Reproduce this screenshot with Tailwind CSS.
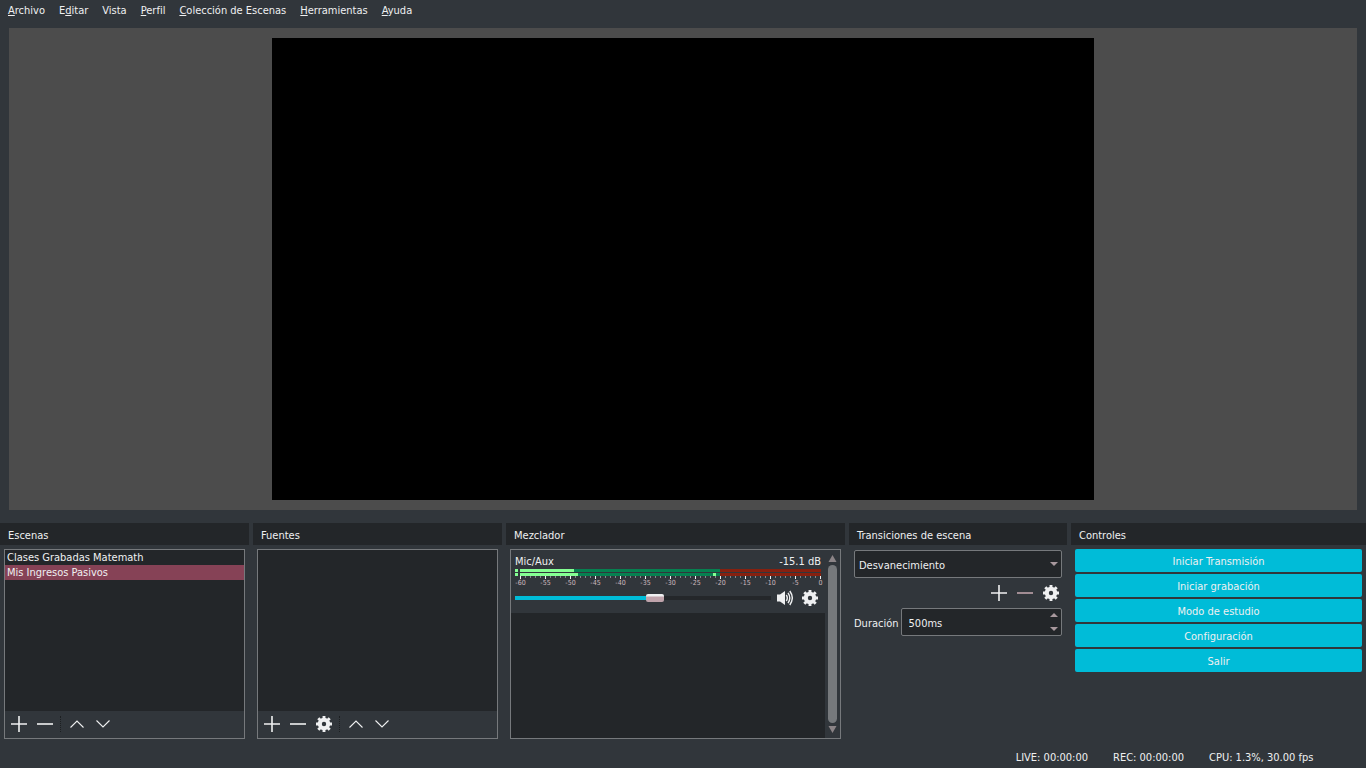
<!DOCTYPE html>
<html lang="es">
<head>
  <meta charset="UTF-8" />
  <meta name="viewport" content="width=device-width, initial-scale=1.0"/>
  <title>OBS</title>
  <script src="https://cdn.jsdelivr.net/npm/@tailwindcss/browser@4"></script>
  <style>
    body {
      font-family: Tahoma, 'DejaVu Sans Condensed', 'Open Sans', sans-serif;
    }
    #volume {
      appearance: none;
      background: linear-gradient(to right, #00bcd8 55%, #24272a 55%) center / 100% 4px no-repeat;
    }
    #volume::-webkit-slider-thumb {
      appearance: none;
      width: 18px;
      height: 8px;
      border-radius: 2px;
      background: linear-gradient(#eff0f1 2px, #bfa3ab 3px);
    }
  </style>
</head>
<body class="h-screen flex flex-col overflow-hidden bg-[#31363b] text-[#eff0f1] text-[11px] leading-[15px]">

  <!-- Shared icons -->
  <svg class="hidden">
    <symbol id="plus" viewBox="0 0 16 16"><path d="M0 8h16M8 0v16" stroke="currentColor" stroke-width="1.600"/></symbol>
    <symbol id="minus" viewBox="0 0 16 16"><path d="M0 8h16" stroke="currentColor" stroke-width="1.600"/></symbol>
    <symbol id="up" viewBox="0 0 16 16"><path d="M1.500 11.500L8 5l6.500 6.500" fill="none" stroke="currentColor" stroke-width="1.100"/></symbol>
    <symbol id="down" viewBox="0 0 16 16"><path d="M1.500 4.500L8 11l6.500-6.500" fill="none" stroke="currentColor" stroke-width="1.100"/></symbol>
    <symbol id="gear" viewBox="0 0 16 16">
      <circle cx="8" cy="8" r="4.200" fill="none" stroke="currentColor" stroke-width="4"/>
      <path d="M8 0v3M8 13v3M0 8h3M13 8h3M2.300 2.300l2 2M11.700 11.700l2 2M2.300 13.700l2-2M11.700 4.300l2-2" stroke="currentColor" stroke-width="2.900"/>
    </symbol>
    <symbol id="speaker" viewBox="0 0 16 16">
      <path d="M0 4.500h3L8 1v14l-5-3.500H0z" fill="currentColor"/>
      <path d="M9.300 5q2 3 0 6M11 2.800q3.600 5.200 0 10.400M12.800 1q5 7 0 14" fill="none" stroke="currentColor" stroke-width="1.400"/>
    </symbol>
  </svg>

  <nav class="flex h-5 shrink-0 items-center gap-[14px] px-2">
    <a href="#"><u>A</u>rchivo</a>
    <a href="#">E<u>d</u>itar</a>
    <a href="#">Vista</a>
    <a href="#"><u>P</u>erfil</a>
    <a href="#"><u>C</u>olección de Escenas</a>
    <a href="#"><u>H</u>erramientas</a>
    <a href="#"><u>A</u>yuda</a>
  </nav>

  <!-- Preview -->
  <main class="mx-[9px] mt-2 flex min-h-0 flex-1 justify-center bg-[#4c4c4c] py-[10px]">
    <div class="aspect-video h-full bg-black"></div>
  </main>

  <!-- Docks -->
  <div class="mt-[13px] grid h-[220px] shrink-0 grid-cols-[249fr_249fr_339fr_218fr_295fr] gap-1">

    <section class="flex min-w-0 flex-col">
      <h2 class="bg-[#232629] px-2 pt-[5px] pb-px leading-4">Escenas</h2>
      <div class="m-1 flex flex-1 flex-col border border-[#76797c] bg-[#232629]">
        <ul class="flex-1">
          <li class="px-[2px] pt-px leading-[14px]">Clases Grabadas Matemath</li>
          <li class="bg-[#864256] px-[2px] pt-px leading-[14px]">Mis Ingresos Pasivos</li>
        </ul>
        <div class="flex h-[27px] items-center gap-[10px] bg-[#31363b] px-[6px] pb-[2px]">
          <button aria-label="Añadir escena"><svg class="size-4"><use href="#plus"/></svg></button>
          <button aria-label="Quitar escena"><svg class="size-4"><use href="#minus"/></svg></button>
          <div class="-mx-[3px] h-4 w-[2px] border-l border-dotted border-[#1c1f21]"></div>
          <button aria-label="Subir escena"><svg class="size-4"><use href="#up"/></svg></button>
          <button aria-label="Bajar escena"><svg class="size-4"><use href="#down"/></svg></button>
        </div>
      </div>
    </section>

    <section class="flex min-w-0 flex-col">
      <h2 class="bg-[#232629] px-2 pt-[5px] pb-px leading-4">Fuentes</h2>
      <div class="m-1 flex flex-1 flex-col border border-[#76797c] bg-[#232629]">
        <ul class="flex-1"></ul>
        <div class="flex h-[27px] items-center gap-[10px] bg-[#31363b] px-[6px] pb-[2px]">
          <button aria-label="Añadir fuente"><svg class="size-4"><use href="#plus"/></svg></button>
          <button aria-label="Quitar fuente"><svg class="size-4"><use href="#minus"/></svg></button>
          <button aria-label="Propiedades"><svg class="size-4"><use href="#gear"/></svg></button>
          <div class="-mx-[3px] h-4 w-[2px] border-l border-dotted border-[#1c1f21]"></div>
          <button aria-label="Subir fuente"><svg class="size-4"><use href="#up"/></svg></button>
          <button aria-label="Bajar fuente"><svg class="size-4"><use href="#down"/></svg></button>
        </div>
      </div>
    </section>

    <section class="flex min-w-0 flex-col">
      <h2 class="bg-[#232629] px-2 pt-[5px] pb-px leading-4">Mezclador</h2>
      <div class="m-1 flex flex-1 border border-[#76797c] bg-[#31363b]">
        <div class="flex min-w-0 flex-1 flex-col">
          <div class="h-[63px] px-1 pt-1">
            <div class="flex justify-between">
              <label for="volume">Mic/Aux</label>
              <span>-15.1 dB</span>
            </div>
            <div id="meter" class="flex flex-col gap-px"></div>
            <div id="ticks" class="ml-[5px] flex h-[3px] justify-between"></div>
            <div id="scale" class="ml-[5px] flex h-[7px] justify-between text-[7px] leading-[8px] text-[#cdb9bf]"></div>
            <div class="mt-1 flex items-center">
              <input id="volume" type="range" value="55" class="h-4 min-w-0 flex-1" />
              <button class="ml-[6px]" aria-label="Silenciar"><svg class="size-4"><use href="#speaker"/></svg></button>
              <button class="mr-[3px] ml-[9px]" aria-label="Ajustes de audio"><svg class="size-4"><use href="#gear"/></svg></button>
            </div>
          </div>
          <div class="flex-1 bg-[#232629]"></div>
        </div>
        <div class="flex w-[15px] flex-col items-center py-1">
          <svg class="h-2 w-[9px]" viewBox="0 0 9 8"><path d="M4.500 1L8.500 8h-8z" fill="#8b8487"/></svg>
          <div class="my-[3px] w-[9px] flex-1 rounded-full bg-[#76797c]"></div>
          <svg class="h-2 w-[9px]" viewBox="0 0 9 8"><path d="M.500 0h8L4.500 7z" fill="#8b8487"/></svg>
        </div>
      </div>
    </section>

    <section class="flex min-w-0 flex-col">
      <h2 class="bg-[#232629] px-2 pt-[5px] pb-px leading-4">Transiciones de escena</h2>
      <div class="flex flex-col px-[5px] pt-[5px]">
        <div class="relative">
          <select aria-label="Transición" class="h-7 w-full appearance-none rounded-xs border border-[#76797c] bg-[#232629] px-1 pt-[2px]">
            <option>Desvanecimiento</option>
          </select>
          <svg class="pointer-events-none absolute top-3 right-1 h-1 w-2" viewBox="0 0 8 4"><path d="M0 0h8L4 4z" fill="#a8989d"/></svg>
        </div>
        <div class="mt-[7px] flex justify-end gap-[10px] pr-[3px]">
          <button aria-label="Añadir transición"><svg class="size-4"><use href="#plus"/></svg></button>
          <button class="text-[#bfa3ab]" aria-label="Quitar transición"><svg class="size-4"><use href="#minus"/></svg></button>
          <button aria-label="Propiedades de transición"><svg class="size-4"><use href="#gear"/></svg></button>
        </div>
        <div class="mt-[7px] flex items-center gap-[2px]">
          <label for="duration" class="pt-[2px]">Duración</label>
          <div class="flex h-7 min-w-0 flex-1 rounded-xs border border-[#76797c] bg-[#232629]">
            <input id="duration" type="text" value="500ms" class="min-w-0 flex-1 px-[7px] pt-[2px]" />
            <div class="flex flex-col justify-between px-[3px] py-1">
              <button aria-label="Aumentar"><svg class="h-1 w-2" viewBox="0 0 8 4"><path d="M4 0l4 4H0z" fill="#a8989d"/></svg></button>
              <button aria-label="Reducir"><svg class="h-1 w-2" viewBox="0 0 8 4"><path d="M0 0h8L4 4z" fill="#a8989d"/></svg></button>
            </div>
          </div>
        </div>
      </div>
    </section>

    <section class="flex min-w-0 flex-col">
      <h2 class="bg-[#232629] px-2 pt-[5px] pb-px leading-4">Controles</h2>
      <div class="flex flex-col gap-[2px] p-1">
        <button class="h-[23px] rounded-xs bg-[#00bcd8] pt-[2px]">Iniciar Transmisión</button>
        <button class="h-[23px] rounded-xs bg-[#00bcd8] pt-[2px]">Iniciar grabación</button>
        <button class="h-[23px] rounded-xs bg-[#00bcd8] pt-[2px]">Modo de estudio</button>
        <button class="h-[23px] rounded-xs bg-[#00bcd8] pt-[2px]">Configuración</button>
        <button class="h-[23px] rounded-xs bg-[#00bcd8] pt-[2px]">Salir</button>
      </div>
    </section>
  </div>

  <footer class="flex h-[25px] shrink-0 items-center justify-end gap-[25px] pt-1 pr-[49px]">
    <span>LIVE: 00:00:00</span>
    <span>REC: 00:00:00</span>
    <span class="min-w-[108px]">CPU: 1.3%, 30.00 fps</span>
  </footer>

  <script>
    const meter = document.getElementById('meter');
    const ticks = document.getElementById('ticks');
    const scale = document.getElementById('scale');

    // level and peak per audio channel, in % of the -60..0 dB range
    const channels = [{ level: 18 }, { level: 19.3, peak: 64 }];

    channels.forEach((c) => {
      const peak = c.peak ? `<i class="absolute h-full w-[3px] bg-[#84ff93]" style="left:${c.peak}%"></i>` : '';
      meter.innerHTML += `
        <div class="flex h-[3px] gap-[2px]">
          <i class="w-[3px] bg-[#84ff93]"></i>
          <div class="relative flex flex-1">
            <i class="bg-[#84ff93]" style="width:${c.level}%"></i>
            <i class="bg-[#068050]" style="width:${66.5 - c.level}%"></i>
            <i class="flex-1 bg-[#86200f]"></i>
            ${peak}
          </div>
        </div>`;
    });

    for (let db = -60; db <= 0; db++) {
      if (db % 5 === 0) {
        ticks.innerHTML += '<i class="h-[3px] w-px bg-[#eff0f1]"></i>';
        scale.innerHTML += `<span class="flex w-px justify-center">${db}</span>`;
      } else {
        ticks.innerHTML += '<i class="h-[2px] w-px bg-[#85888b]"></i>';
      }
    }

    document.getElementById('volume').addEventListener('input', (e) => {
      const v = e.target.value;
      e.target.style.backgroundImage = `linear-gradient(to right, #00bcd8 ${v}%, #24272a ${v}%)`;
    });
  </script>
</body>
</html>
